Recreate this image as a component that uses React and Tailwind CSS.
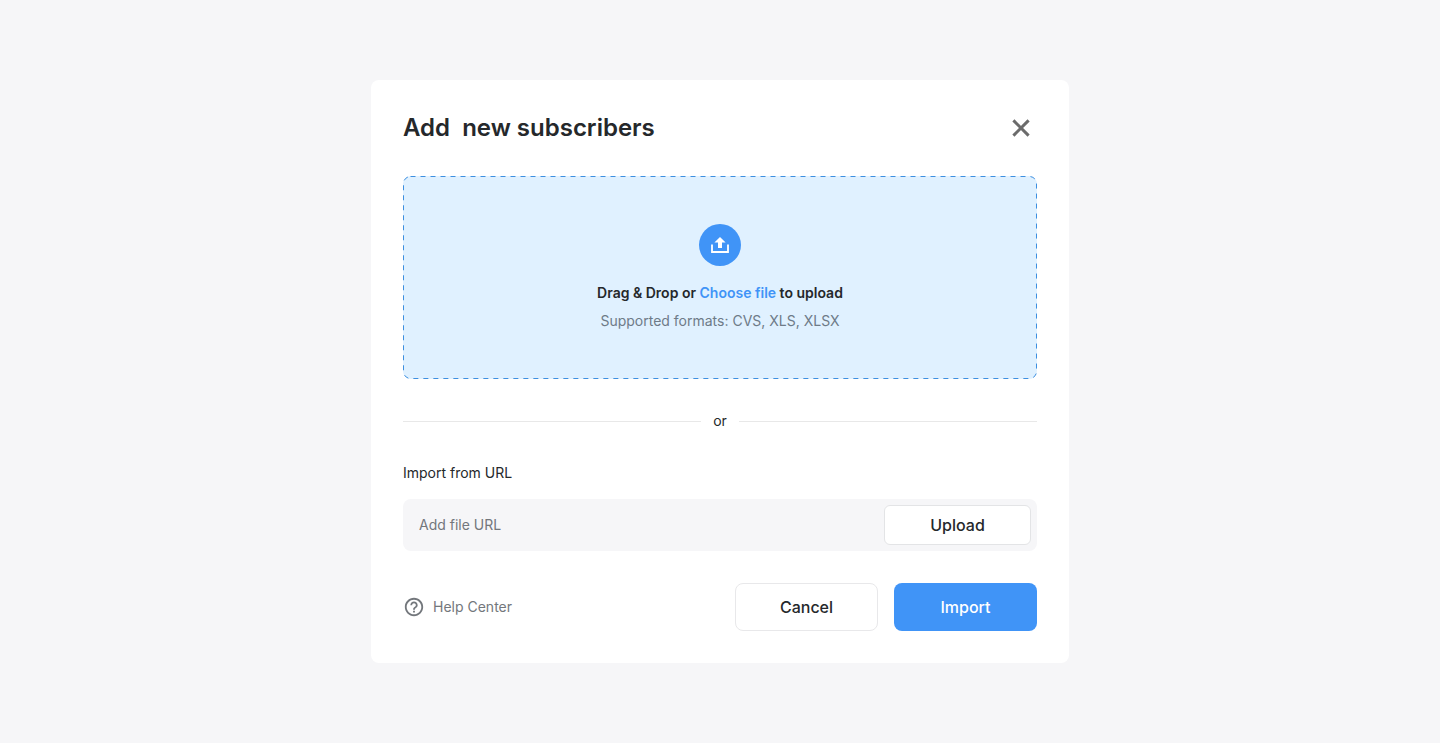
import { useState } from 'react';

const CloseIcon = () => (
  <svg width="24" height="24" viewBox="0 0 24 24" fill="none" stroke="currentColor" strokeWidth="3" aria-hidden="true">
    <path d="M4.4 4.4l15.2 15.2M19.6 4.4L4.4 19.6" />
  </svg>
);

const UploadIcon = () => (
  <svg width="20" height="20" viewBox="0 0 20 20" fill="none" aria-hidden="true">
    <path d="M10 2L15.6 7.6H12V13H8V7.6H4.4L10 2Z" fill="currentColor" />
    <path d="M2 9.5V17H18V9.5" stroke="currentColor" strokeWidth="1.8" />
  </svg>
);

const HelpIcon = () => (
  <svg width="22" height="22" viewBox="0 0 24 24" fill="currentColor" aria-hidden="true">
    <path d="M11 18h2v-2h-2v2zm1-16C6.48 2 2 6.48 2 12s4.48 10 10 10 10-4.48 10-10S17.52 2 12 2zm0 18c-4.41 0-8-3.59-8-8s3.59-8 8-8 8 3.59 8 8-3.59 8-8 8zm0-14c-2.21 0-4 1.79-4 4h2c0-1.1.9-2 2-2s2 .9 2 2c0 2-3 1.75-3 5h2c0-2.25 3-2.5 3-5 0-2.21-1.79-4-4-4z" />
  </svg>
);

const DashedOutline = () => (
  <svg className="absolute inset-0 w-full h-full overflow-visible pointer-events-none" aria-hidden="true">
    <rect x="0.5" y="0.5" rx="7" className="h-[calc(100%-1px)] w-[calc(100%-1px)]" fill="none" stroke="#3d8fe0" strokeDasharray="5 5" />
  </svg>
);

const App = () => {
  const [url, setUrl] = useState('');

  return (
    <div className="min-h-screen flex items-center justify-center bg-[#f6f6f8] font-['Inter',sans-serif] text-sm text-[#25282b]">
      <div role="dialog" aria-labelledby="dialog-title" className="w-full max-w-[698px] flex flex-col gap-8 rounded-lg bg-white p-8">
        <header className="flex items-center justify-between">
          <h1 id="dialog-title" className="text-2xl font-semibold whitespace-pre">{'Add  new subscribers'}</h1>
          <button type="button" aria-label="Close" className="mr-1 cursor-pointer text-[#6b6b6b]">
            <CloseIcon />
          </button>
        </header>

        <div className="relative flex flex-col items-center rounded-lg bg-[#e0f1ff] py-12">
          <DashedOutline />
          <div className="flex size-[42px] items-center justify-center rounded-full bg-[#4094f7] text-white">
            <UploadIcon />
          </div>
          <p className="mt-[17px] font-semibold">
            Drag &amp; Drop or{' '}
            <label htmlFor="file" className="cursor-pointer text-[#4094f7]">Choose file</label>
            <input id="file" type="file" accept=".csv,.xls,.xlsx" className="sr-only" /> to upload
          </p>
          <p className="mt-2 text-[#6e7b88]">Supported formats: CVS, XLS, XLSX</p>
        </div>

        <div className="flex items-center gap-3">
          <hr className="flex-1 border-[#e8e8e8]" />
          <span>or</span>
          <hr className="flex-1 border-[#e8e8e8]" />
        </div>

        <div className="flex flex-col gap-4">
          <label htmlFor="file-url">Import from URL</label>
          <div className="flex h-[52px] items-center rounded-lg bg-[#f6f6f8] p-1.5">
            <input
              id="file-url"
              type="url"
              value={url}
              onChange={(e) => setUrl(e.target.value)}
              placeholder="Add file URL"
              className="min-w-0 flex-1 px-2.5 outline-none placeholder:text-[#73777c]"
            />
            <button type="button" className="h-10 w-[147px] cursor-pointer rounded-md border border-[#e3e4e6] bg-white text-base font-medium">Upload</button>
          </div>
        </div>

        <footer className="flex items-center justify-between">
          <a href="#help" className="flex items-center gap-2 text-[#73777c]">
            <HelpIcon />
            Help Center
          </a>
          <div className="flex gap-4">
            <button type="button" className="h-12 w-[143px] cursor-pointer rounded-lg border border-[#e8e8ea] bg-white text-base font-medium">Cancel</button>
            <button type="button" className="h-12 w-[143px] cursor-pointer rounded-lg bg-[#4094f7] text-base font-medium text-white">Import</button>
          </div>
        </footer>
      </div>
    </div>
  );
};

export default App;
